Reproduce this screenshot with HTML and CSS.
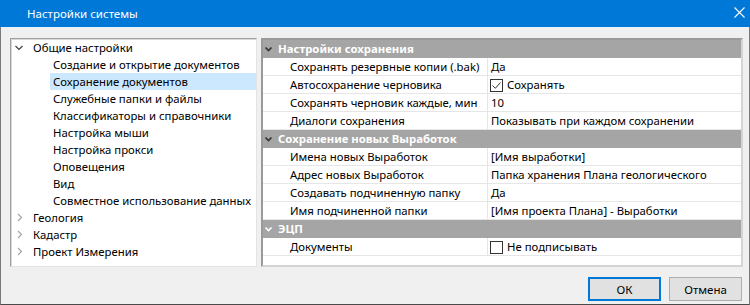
FILE: index.html
```html
<!DOCTYPE html>
<html lang="ru">
<head>
<meta charset="utf-8">
<title>Настройки системы</title>
<link rel="stylesheet" href="styles.css">
</head>
<body>
<div class="window">
  <div class="titlebar">
    <span class="title">Настройки системы</span>
    <svg class="close" width="11" height="11" viewBox="0 0 11 11"><path d="M0.5 0.5 L10.5 10.5 M10.5 0.5 L0.5 10.5" stroke="#fff" stroke-width="1.1" fill="none"/></svg>
  </div>
  <div class="body">
    <div class="main">
      <div class="tree">
        <div class="node top"><span class="exp"><svg width="16" height="17" viewBox="0 0 16 17"><path d="M4.5 7 L8 10.5 L11.5 7" stroke="#404040" stroke-width="1.2" fill="none"/></svg></span><span class="label">Общие настройки</span></div>
        <div class="node child">Создание и открытие документов</div>
        <div class="node child selected">Сохранение документов</div>
        <div class="node child">Служебные папки и файлы</div>
        <div class="node child">Классификаторы и справочники</div>
        <div class="node child">Настройка мыши</div>
        <div class="node child">Настройка прокси</div>
        <div class="node child">Оповещения</div>
        <div class="node child">Вид</div>
        <div class="node child">Совместное использование данных</div>
        <div class="node top"><span class="exp"><svg width="16" height="17" viewBox="0 0 16 17"><path d="M7 5 L10.5 8.5 L7 12" stroke="#a6a6a6" stroke-width="1.2" fill="none"/></svg></span><span class="label">Геология</span></div>
        <div class="node top"><span class="exp"><svg width="16" height="17" viewBox="0 0 16 17"><path d="M7 5 L10.5 8.5 L7 12" stroke="#a6a6a6" stroke-width="1.2" fill="none"/></svg></span><span class="label">Кадастр</span></div>
        <div class="node top"><span class="exp"><svg width="16" height="17" viewBox="0 0 16 17"><path d="M7 5 L10.5 8.5 L7 12" stroke="#a6a6a6" stroke-width="1.2" fill="none"/></svg></span><span class="label">Проект Измерения</span></div>
      </div>
      <div class="grid">
        <div class="cat"><svg class="cat-icon" width="15" height="18" viewBox="0 0 15 18"><path d="M2.5 7.5 L5.5 10.5 L8.5 7.5" stroke="#333" stroke-width="1.7" fill="none"/></svg><span>Настройки сохранения</span></div>
        <div class="prop"><div class="name">Сохранять резервные копии (.bak)</div><div class="val">Да</div></div>
        <div class="prop"><div class="name">Автосохранение черновика</div><div class="val"><span class="check on"><svg width="11" height="11" viewBox="0 0 11 11"><path d="M1.5 5.5 L4.3 8.3 L9.5 2.5" stroke="#333" stroke-width="1" fill="none"/></svg></span>Сохранять</div></div>
        <div class="prop"><div class="name">Сохранять черновик каждые, мин</div><div class="val">10</div></div>
        <div class="prop"><div class="name">Диалоги сохранения</div><div class="val">Показывать при каждом сохранении</div></div>
        <div class="cat"><svg class="cat-icon" width="15" height="18" viewBox="0 0 15 18"><path d="M2.5 7.5 L5.5 10.5 L8.5 7.5" stroke="#333" stroke-width="1.7" fill="none"/></svg><span>Сохранение новых Выработок</span></div>
        <div class="prop"><div class="name">Имена новых Выработок</div><div class="val">[Имя выработки]</div></div>
        <div class="prop"><div class="name">Адрес новых Выработок</div><div class="val">Папка хранения Плана геологического</div></div>
        <div class="prop"><div class="name">Создавать подчиненную папку</div><div class="val">Да</div></div>
        <div class="prop"><div class="name">Имя подчиненной папки</div><div class="val">[Имя проекта Плана] - Выработки</div></div>
        <div class="cat"><svg class="cat-icon" width="15" height="18" viewBox="0 0 15 18"><path d="M2.5 7.5 L5.5 10.5 L8.5 7.5" stroke="#fff" stroke-width="1.7" fill="none"/></svg><span>ЭЦП</span></div>
        <div class="prop"><div class="name">Документы</div><div class="val"><span class="check"></span>Не подписывать</div></div>
      </div>
    </div>
    <div class="buttons">
      <button class="btn default">ОК</button>
      <button class="btn">Отмена</button>
    </div>
  </div>
</div>
</body>
</html>
```
FILE: styles.css
```css
* { box-sizing: border-box; }
html, body { margin: 0; padding: 0; }
body {
  width: 750px;
  height: 305px;
  overflow: hidden;
  font-family: "Noto Sans", "Open Sans", sans-serif;
  font-size: 11.35px;
  color: #000;
  background: #f0f0f0;
}
.window {
  width: 750px;
  height: 305px;
  display: flex;
  flex-direction: column;
}
.titlebar {
  height: 27px;
  flex: none;
  background: #0078d7;
  color: #fff;
  display: flex;
  align-items: center;
  padding-left: 27px;
  padding-right: 5px;
}
.title { flex: 1; font-size: 11.5px; }
.close { display: block; margin-top: -2px; }
.body {
  flex: 1;
  display: flex;
  flex-direction: column;
  border: 1px solid #4a4a4a;
  border-top: none;
  border-left-color: #7a7a7a;
  border-right-color: #7a7a7a;
  padding: 11px 6px 3px 9px;
}
.main {
  height: 229px;
  display: flex;
  gap: 4px;
}
.tree {
  width: 247px;
  background: #fff;
  border: 1px solid;
  border-color: #a0a0a0 #e3e3e3 #e3e3e3 #a0a0a0;
  box-shadow: inset 1px 1px 0 #d8d8d8;
}
.node {
  height: 17px;
  line-height: 18px;
  white-space: nowrap;
}
.node.top { display: flex; }
.exp { width: 16px; height: 17px; flex: none; }
.exp svg { display: block; }
.node.top .label { padding-left: 6px; }
.node.child { margin-left: 39px; padding-left: 3px; }
.node.selected { background: #cce8ff; }
.grid {
  flex: 1;
  background: #fff;
  border: 2px solid;
  border-color: #9a9a9a #d4d4d4 #d4d4d4 #9a9a9a;
}
.cat {
  height: 18px;
  background: #a5a5a5;
  color: #fff;
  font-weight: bold;
  display: flex;
  align-items: center;
  line-height: 18px;
}
.cat-icon { display: block; flex: none; }
.prop {
  height: 18px;
  display: grid;
  grid-template-columns: 225px 1fr;
  border-bottom: 1px solid #e6e6e6;
  line-height: 18px;
  white-space: nowrap;
}
.name {
  padding-left: 27px;
  border-right: 1px solid #e6e6e6;
}
.val {
  padding-left: 3px;
  display: flex;
  align-items: center;
}
.check {
  width: 13px;
  height: 13px;
  border: 1px solid #333;
  background: #fff;
  margin-left: -1px;
  margin-right: 4px;
  flex: none;
}
.check svg { display: block; }
.buttons {
  margin-top: 10px;
  height: 24px;
  display: flex;
  justify-content: flex-end;
  gap: 8px;
  padding-right: 1px;
}
.btn {
  width: 73px;
  height: 24px;
  margin: 0;
  padding: 0;
  font-family: inherit;
  font-size: 11.5px;
  color: #000;
  background: #e1e1e1;
  border: 1px solid #adadad;
}
.btn.default { border: 2px solid #0078d7; }
```
